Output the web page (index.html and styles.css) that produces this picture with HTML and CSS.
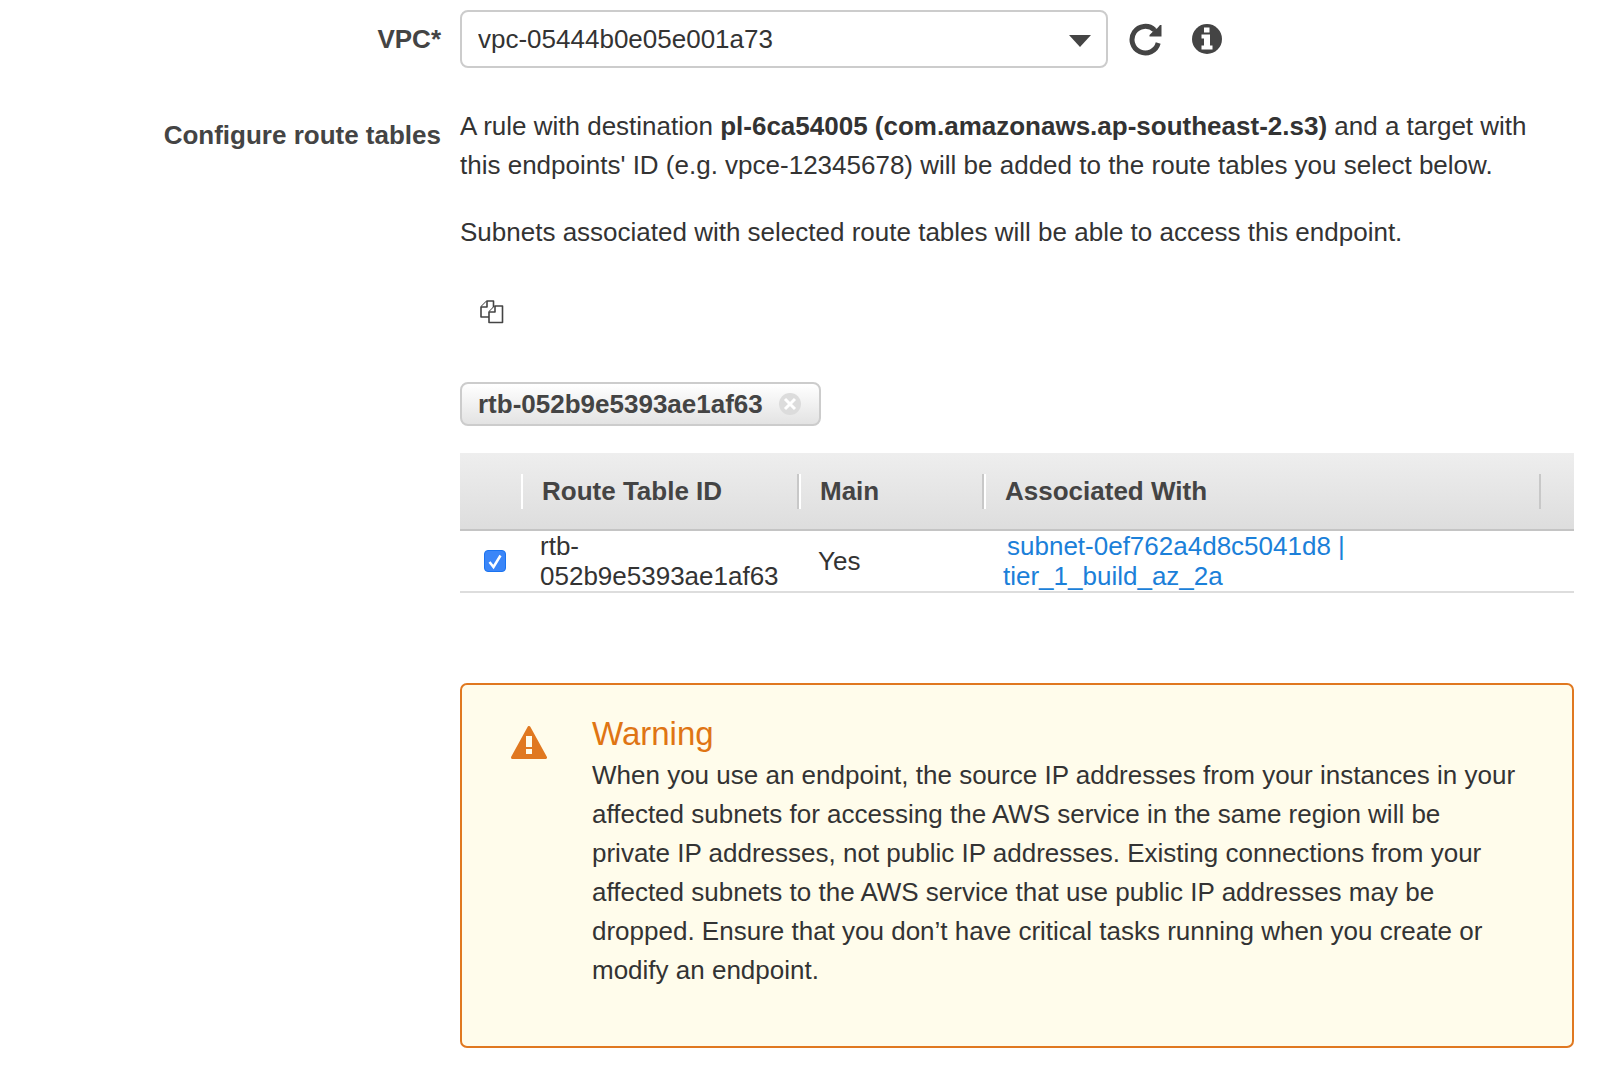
FILE: index.html
```html
<!DOCTYPE html>
<html lang="en">
<head>
  <meta charset="utf-8">
  <meta name="viewport" content="width=device-width, initial-scale=1">
  <title>Create Endpoint</title>
  <link rel="stylesheet" href="styles.css">
</head>
<body>
  <form class="form">
    <div class="row">
      <label class="row-label vpc-label" for="vpc">VPC*</label>
      <div class="vpc-field">
        <div class="select-wrap">
          <select class="select" id="vpc">
            <option>vpc-05444b0e05e001a73</option>
          </select>
          <svg class="caret" viewBox="0 0 22 12" aria-hidden="true"><path d="M0 0h22L11 12z" fill="#444"/></svg>
        </div>
        <button class="icon-button refresh" type="button" aria-label="Refresh">
          <svg viewBox="0 0 34 34" width="34" height="34" aria-hidden="true">
            <path d="M30.200 21A13.300 13.300 0 1 1 26.500 8" fill="none" stroke="#444" stroke-width="5"/>
            <path d="M33.500 3v11.500H21.500v-1.500l3.500-3.500 1-2 3-1 3-3.500z" fill="#444"/>
          </svg>
        </button>
        <button class="icon-button" type="button" aria-label="Information">
          <svg viewBox="0 0 30 30" width="30" height="30" aria-hidden="true">
            <circle cx="15" cy="15" r="15" fill="#444"/>
            <path d="M12 3.500h5.500v5H12zM9.500 10.500h8.500v11h2.500v4h-11v-4h2.500v-7H9.500z" fill="#fff"/>
          </svg>
        </button>
      </div>
    </div>

    <div class="row">
      <div class="row-label tables-label" id="tables-label">Configure route tables</div>
      <div class="content">
        <p class="text">A rule with destination <strong>pl-6ca54005 (com.amazonaws.ap-southeast-2.s3)</strong> and a target with this endpoints' ID (e.g. vpce-12345678) will be added to the route tables you select below.</p>
        <p class="text">Subnets associated with selected route tables will be able to access this endpoint.</p>

        <button class="icon-button copy" type="button" aria-label="Copy">
          <svg viewBox="0 0 24 24" width="24" height="24" aria-hidden="true">
            <g fill="#fff" stroke="#444" stroke-width="1.600" stroke-linejoin="round">
              <path d="M7 1h6.500v16H1V7z"/>
              <path d="M7 1v6H1"/>
              <path d="M15 6h7.500v16.500H9V12z"/>
              <path d="M15 6v6H9"/>
            </g>
          </svg>
        </button>

        <div class="token">
          <span>rtb-052b9e5393ae1af63</span>
          <button class="icon-button" type="button" aria-label="Remove rtb-052b9e5393ae1af63">
            <svg viewBox="0 0 22 22" width="22" height="22" aria-hidden="true">
              <circle cx="11" cy="11" r="11" fill="#dcdcdc"/>
              <path d="M6 6l10 10M16 6L6 16" stroke="#fff" stroke-width="3"/>
            </svg>
          </button>
        </div>

        <table class="table" aria-labelledby="tables-label">
          <colgroup>
            <col class="col-check">
            <col class="col-id">
            <col class="col-main">
            <col class="col-with">
            <col class="col-end">
          </colgroup>
          <thead>
            <tr>
              <th><div class="head light"></div></th>
              <th scope="col"><div class="head">Route Table ID</div></th>
              <th scope="col"><div class="head">Main</div></th>
              <th scope="col"><div class="head dark">Associated With</div></th>
              <th></th>
            </tr>
          </thead>
          <tbody>
            <tr>
              <td class="check-cell"><input class="check" type="checkbox" checked aria-label="Select rtb-052b9e5393ae1af63"></td>
              <td>rtb-<br>052b9e5393ae1af63</td>
              <td>Yes</td>
              <td colspan="2"><a class="link" href="#subnet"><span class="subnet-id">subnet-0ef762a4d8c5041d8 |</span><br>tier_1_build_az_2a</a></td>
            </tr>
          </tbody>
        </table>

        <section class="warning">
          <svg class="warning-icon" viewBox="0 0 36 33" width="36" height="33" aria-hidden="true">
            <path d="M18 1.500L34.500 31.500h-33z" fill="#e07820" stroke="#e07820" stroke-width="3" stroke-linejoin="round"/>
            <path d="M15 10h6v11h-6zM15 23h6v5h-6z" fill="#fffceb"/>
          </svg>
          <div class="warning-body">
            <h2 class="warning-title">Warning</h2>
            <p class="warning-text">When you use an endpoint, the source IP addresses from your instances in your affected subnets for accessing the AWS service in the same region will be private IP addresses, not public IP addresses. Existing connections from your affected subnets to the AWS service that use public IP addresses may be dropped. Ensure that you don’t have critical tasks running when you create or modify an endpoint.</p>
          </div>
        </section>
      </div>
    </div>
  </form>
</body>
</html>
```
FILE: styles.css
```css
* {
  box-sizing: border-box;
}

body {
  margin: 0;
  background: #fff;
  color: #333;
  font: 26px/39px "Liberation Sans", Arial, sans-serif;
}

p,
h2 {
  margin: 0;
}

.form {
  padding: 10px 26px 24px 0;
}

.row {
  display: grid;
  grid-template-columns: 441px minmax(0, 1fr);
  column-gap: 19px;
  margin-bottom: 39px;
}

.row:last-child {
  margin-bottom: 0;
}

.row-label {
  color: #444;
  font-weight: bold;
  text-align: right;
}

.vpc-label {
  align-self: center;
}

.tables-label {
  padding-top: 9px;
}

.vpc-field {
  display: flex;
  align-items: center;
  gap: 30px;
}

.select-wrap {
  position: relative;
  flex: 0 1 648px;
}

.select {
  display: block;
  width: 100%;
  height: 58px;
  padding: 0 56px 0 16px;
  border: 2px solid #ccc;
  border-radius: 8px;
  background: #fff;
  color: #333;
  font: inherit;
  appearance: none;
}

.caret {
  position: absolute;
  top: 25px;
  right: 17px;
  width: 22px;
  height: 12px;
  pointer-events: none;
}

.icon-button {
  display: flex;
  padding: 0;
  border: 0;
  background: none;
  cursor: pointer;
}

.refresh {
  margin-left: -10px;
}

.text {
  margin-bottom: 28px;
}

.copy {
  margin: 48px 0 58px 20px;
}

.token {
  display: inline-flex;
  align-items: center;
  gap: 16px;
  height: 44px;
  padding: 0 18px 0 16px;
  border: 2px solid #ccc;
  border-radius: 8px;
  background: linear-gradient(#fff, #e3e3e3);
  color: #444;
  font-weight: bold;
  vertical-align: top;
}

.table {
  width: 100%;
  margin-top: 27px;
  border-collapse: separate;
  border-spacing: 0;
  table-layout: fixed;
  line-height: 30px;
}

.col-check {
  width: 63px;
}

.col-id {
  width: 278px;
}

.col-main {
  width: 185px;
}

.col-end {
  width: 33px;
}

.table thead {
  background: linear-gradient(#eee, #ddd);
}

.table th {
  height: 78px;
  padding: 0;
  border-bottom: 2px solid #c4c4c4;
  color: #444;
  text-align: left;
}

.head {
  height: 35px;
  padding-left: 19px;
  border-right: 2px solid #fff;
  line-height: 35px;
  box-shadow: inset -2px 0 #c8c8c8;
}

.head.light {
  box-shadow: none;
}

.head.dark {
  border-right-color: #c8c8c8;
  box-shadow: none;
}

.table td {
  padding: 0 0 0 17px;
  border-bottom: 2px solid #ddd;
}

.table .check-cell {
  padding-left: 24px;
}

.check {
  display: block;
  width: 22px;
  height: 22px;
  margin: 0;
  border: 1px solid #1a73f0;
  border-radius: 4px;
  appearance: none;
}

.check:checked {
  background: #3b86f8 url("data:image/svg+xml,%3Csvg xmlns='http://www.w3.org/2000/svg' viewBox='0 0 20 20'%3E%3Cpath d='M4.500 11l4 5L15.500 4.500' fill='none' stroke='white' stroke-width='2.500'/%3E%3C/svg%3E");
}

.link {
  color: #1b80d9;
  text-decoration: none;
}

.subnet-id {
  padding-left: 4px;
}

.warning {
  display: flex;
  gap: 45px;
  margin-top: 90px;
  padding: 29px 48px 56px 49px;
  border: 2px solid #e07820;
  border-radius: 7px;
  background: #fffceb;
}

.warning-icon {
  flex: none;
  margin-top: 12px;
}

.warning-title {
  margin-bottom: 3px;
  color: #df7514;
  font-size: 33px;
  font-weight: normal;
  line-height: 39px;
}
```
